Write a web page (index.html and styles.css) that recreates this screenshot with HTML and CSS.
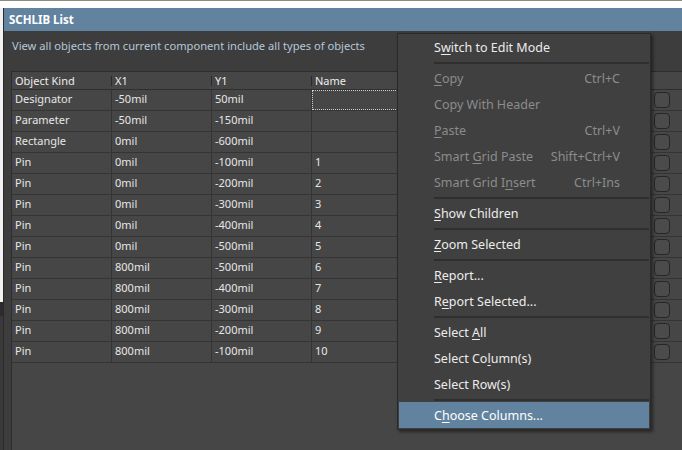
FILE: index.html
```html
<!DOCTYPE html>
<html>
<head>
<meta charset="utf-8">
<link rel="stylesheet" href="styles.css">
</head>
<body>
<div class="topstrip"></div>
<div class="main">
  <div class="leftstrip"><div class="ls-light"></div><div class="ls-dark"></div><div class="ls-mid"></div></div>
  <div class="panel">
    <div class="titlebar">SCHLIB List</div>
    <div class="pbody">
      <div class="desc">View all objects from current component include all types of objects</div>
      <div class="table">
        <div class="row head">
          <div class="c c1">Object Kind</div><div class="c c2">X1</div><div class="c c3">Y1</div><div class="c c4">Name</div><div class="c c5"></div>
        </div>
        <div class="row"><div class="c c1">Designator</div><div class="c c2">-50mil</div><div class="c c3">50mil</div><div class="c c4"><span class="focus"></span></div><div class="c c5"><span class="chk"></span></div></div>
        <div class="row"><div class="c c1">Parameter</div><div class="c c2">-50mil</div><div class="c c3">-150mil</div><div class="c c4"></div><div class="c c5"><span class="chk"></span></div></div>
        <div class="row"><div class="c c1">Rectangle</div><div class="c c2">0mil</div><div class="c c3">-600mil</div><div class="c c4"></div><div class="c c5"><span class="chk"></span></div></div>
        <div class="row"><div class="c c1">Pin</div><div class="c c2">0mil</div><div class="c c3">-100mil</div><div class="c c4">1</div><div class="c c5"><span class="chk"></span></div></div>
        <div class="row"><div class="c c1">Pin</div><div class="c c2">0mil</div><div class="c c3">-200mil</div><div class="c c4">2</div><div class="c c5"><span class="chk"></span></div></div>
        <div class="row"><div class="c c1">Pin</div><div class="c c2">0mil</div><div class="c c3">-300mil</div><div class="c c4">3</div><div class="c c5"><span class="chk"></span></div></div>
        <div class="row"><div class="c c1">Pin</div><div class="c c2">0mil</div><div class="c c3">-400mil</div><div class="c c4">4</div><div class="c c5"><span class="chk"></span></div></div>
        <div class="row"><div class="c c1">Pin</div><div class="c c2">0mil</div><div class="c c3">-500mil</div><div class="c c4">5</div><div class="c c5"><span class="chk"></span></div></div>
        <div class="row"><div class="c c1">Pin</div><div class="c c2">800mil</div><div class="c c3">-500mil</div><div class="c c4">6</div><div class="c c5"><span class="chk"></span></div></div>
        <div class="row"><div class="c c1">Pin</div><div class="c c2">800mil</div><div class="c c3">-400mil</div><div class="c c4">7</div><div class="c c5"><span class="chk"></span></div></div>
        <div class="row"><div class="c c1">Pin</div><div class="c c2">800mil</div><div class="c c3">-300mil</div><div class="c c4">8</div><div class="c c5"><span class="chk"></span></div></div>
        <div class="row"><div class="c c1">Pin</div><div class="c c2">800mil</div><div class="c c3">-200mil</div><div class="c c4">9</div><div class="c c5"><span class="chk"></span></div></div>
        <div class="row"><div class="c c1">Pin</div><div class="c c2">800mil</div><div class="c c3">-100mil</div><div class="c c4">10</div><div class="c c5"><span class="chk"></span></div></div>
        <div class="empty"></div>
      </div>
    </div>
  </div>
</div>

<div class="menu">
  <div class="mi"><span>S<u>w</u>itch to Edit Mode</span></div>
  <div class="sep"></div>
  <div class="mi dis"><span><u>C</u>opy</span><span class="sc">Ctrl+C</span></div>
  <div class="mi dis"><span>Copy With Header</span></div>
  <div class="mi dis"><span><u>P</u>aste</span><span class="sc">Ctrl+V</span></div>
  <div class="mi dis"><span>Smart <u>G</u>rid Paste</span><span class="sc">Shift+Ctrl+V</span></div>
  <div class="mi dis"><span>Smart Grid I<u>n</u>sert</span><span class="sc">Ctrl+Ins</span></div>
  <div class="sep"></div>
  <div class="mi"><span><u>S</u>how Children</span></div>
  <div class="sep"></div>
  <div class="mi"><span><u>Z</u>oom Selected</span></div>
  <div class="sep"></div>
  <div class="mi"><span><u>R</u>eport...</span></div>
  <div class="mi"><span>R<u>e</u>port Selected...</span></div>
  <div class="sep"></div>
  <div class="mi"><span>Select <u>A</u>ll</span></div>
  <div class="mi"><span>Select Co<u>l</u>umn(s)</span></div>
  <div class="mi"><span>Select Row(s)</span></div>
  <div class="sep"></div>
  <div class="mi hl"><span>C<u>h</u>oose Columns...</span></div>
</div>
</body>
</html>
```
FILE: styles.css
```css
* { box-sizing: border-box; }
html, body {
  margin: 0;
  padding: 0;
  width: 682px;
  height: 450px;
  overflow: hidden;
  background: #3d3d3d;
  font-family: "Noto Sans", "Open Sans", sans-serif;
}
.topstrip {
  height: 8px;
  background: #ffffff;
  border-top: 1px solid #8c8c78;
}
.main {
  display: flex;
  height: 442px;
}
.leftstrip {
  width: 4px;
  display: flex;
  flex-direction: column;
  border-right: 1px solid #2a2a2a;
}
.ls-light { height: 294px; background: #f2f2f2; }
.ls-dark { height: 14px; background: #2c2c2c; }
.ls-mid { flex: 1; background: #3a3a3a; }
.panel {
  flex: 1;
  display: flex;
  flex-direction: column;
  min-width: 0;
}
.titlebar {
  height: 23px;
  background: #6283a0;
  color: #ffffff;
  font-weight: bold;
  font-size: 11.5px;
  line-height: 23px;
  padding-left: 5px;
}
.pbody {
  flex: 1;
  background: #3d3d3d;
  padding-left: 7px;
  display: flex;
  flex-direction: column;
}
.desc {
  height: 40px;
  color: #b6c7d8;
  font-size: 11.15px;
  line-height: 30px;
  padding-left: 1px;
}
.table {
  flex: 1;
  background: #464646;
  border-top: 1px solid #2e2e2e;
  border-left: 1px solid #2e2e2e;
  display: flex;
  flex-direction: column;
  font-size: 11px;
  color: #e6e6e6;
}
.row {
  display: flex;
  height: 21px;
  border-bottom: 1px solid #343434;
}
.row.head {
  height: 18px;
  border-bottom: 1px solid #2e2e2e;
  color: #ececec;
}
.c {
  position: relative;
  height: 100%;
  line-height: 18px;
  padding-left: 3px;
  white-space: nowrap;
  border-left: 1px solid #343434;
}
.c1 { width: 99px; border-left: none; }
.c2, .c3 { width: 100px; }
.c4 { width: 339px; }
.c5 { flex: 1; padding-left: 3px; padding-top: 2px; }
.head .c { line-height: 17px; border-left: none; }
.head .c2::before, .head .c3::before, .head .c4::before {
  content: "";
  position: absolute;
  left: 0;
  top: 4px;
  height: 10px;
  border-left: 1px solid #2a2a2a;
}
.head .c2, .head .c3, .head .c4 { padding-left: 4px; }
.focus {
  position: absolute;
  left: 0;
  top: 0;
  right: 0;
  bottom: 0;
  border: 1px dotted #d0d0d0;
}
.chk {
  display: block;
  width: 16px;
  height: 16px;
  border: 1px solid #262626;
  border-radius: 4px;
  background: #4b4b4b;
}
.empty { flex: 1; }

.menu {
  position: absolute;
  left: 397px;
  top: 33px;
  width: 254px;
  height: 397px;
  background: #404040;
  border: 1px solid #2a2a2a;
  box-shadow: 2px 2px 3px rgba(0, 0, 0, 0.45);
  padding: 0 1px;
  font-size: 12.5px;
}
.mi {
  height: 26px;
  display: flex;
  justify-content: space-between;
  align-items: center;
  padding-left: 35px;
  padding-right: 29px;
  color: #ececec;
  white-space: nowrap;
}
.mi.dis { color: #8c8c8c; }
.mi.hl { background: #6283a0; color: #ffffff; }
.mi u { text-decoration-thickness: 1px; text-underline-offset: 2px; }
.sep {
  margin-left: 35px;
  border-top: 2px solid #2f2f2f;
  margin-top: 2px;
  height: 3px;
}
```
